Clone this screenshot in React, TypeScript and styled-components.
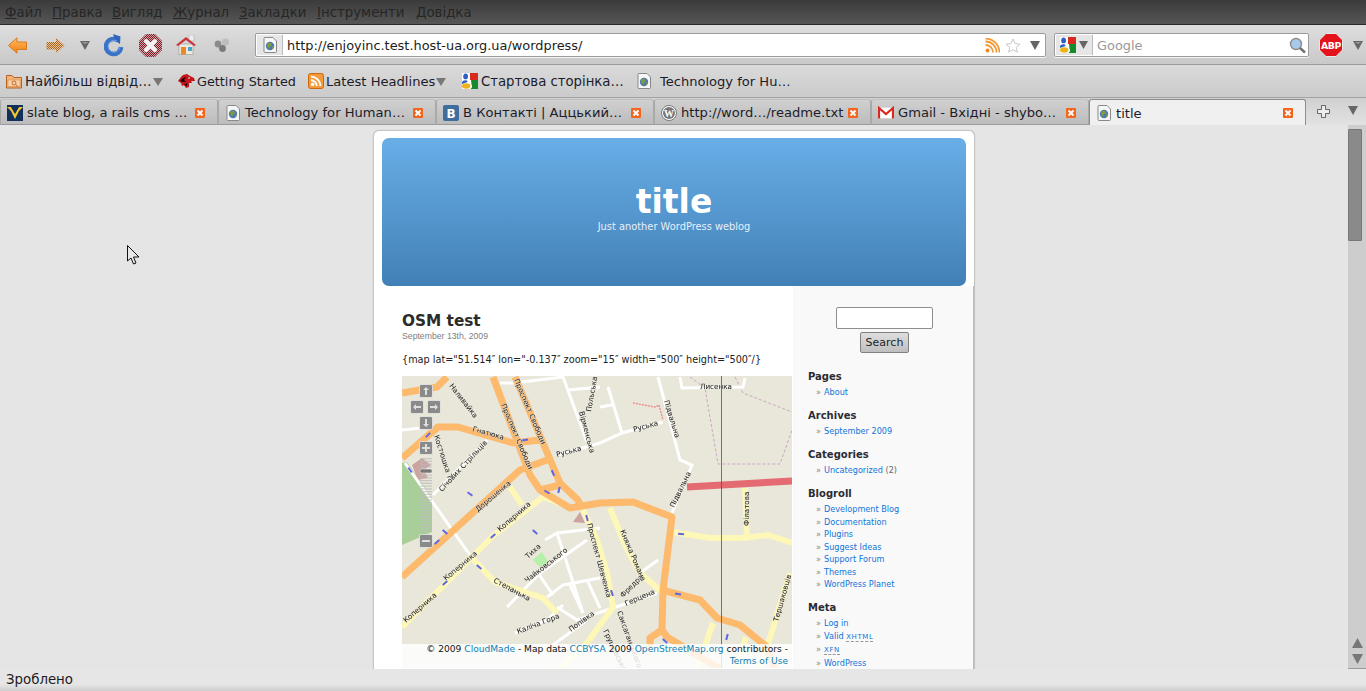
import React from "react";
import styled, { createGlobalStyle } from "styled-components";

const Global = createGlobalStyle`
  html, body { margin: 0; padding: 0; height: 100%; overflow: hidden; }
  body { font-family: "DejaVu Sans", sans-serif; background: #e5e5e5; }
  #root { height: 100%; }
`;

const Win = styled.div`
  position: relative;
  width: 1366px;
  height: 691px;
  display: flex;
  flex-direction: column;
  overflow: hidden;
  font-size: 13.33px;
  color: #222;
`;
const MenuBar = styled.div`
  height: 24px;
  flex: none;
  display: flex;
  align-items: center;
  padding-left: 5px;
  background: linear-gradient(#3b3b3b, #565656);
  border-bottom: 1px solid #2a2a2a;
`;
const MenuItem = styled.span<{ $w: number }>`
  width: ${(p) => p.$w}px;
  color: #262626;
  font-size: 13.33px;
  white-space: nowrap;
`;
const ToolBar = styled.div`
  height: 38px;
  padding-top: 1px;
  flex: none;
  display: flex;
  align-items: center;
  background: linear-gradient(#dedede, #c9c9c9);
  border-bottom: 1px solid #9b9b9b;
`;
const Tool = styled.svg<{ $ml: number }>`
  margin-left: ${(p) => p.$ml}px;
  flex: none;
  display: block;
`;
const Field = styled.div<{ $w: number; $ml: number }>`
  width: ${(p) => p.$w}px;
  margin-left: ${(p) => p.$ml}px;
  height: 24px;
  flex: none;
  box-sizing: border-box;
  display: flex;
  align-items: center;
  background: #fff;
  border: 1px solid #9c9c9c;
  border-radius: 2px;
  box-shadow: 0 1px 0 #f2f2f2;
`;
const FieldBox = styled.div<{ $w: number }>`
  width: ${(p) => p.$w}px;
  height: 20px;
  margin-left: 1px;
  flex: none;
  display: flex;
  align-items: center;
  justify-content: center;
  gap: 3px;
  background: #e6e6e6;
  border-right: 1px solid #bbb;
`;
const FieldText = styled.span<{ $muted?: boolean }>`
  flex: 1;
  margin-left: 4px;
  font-size: 12.9px;
  white-space: nowrap;
  color: ${(p) => (p.$muted ? "#999" : "#1c1c1c")};
`;
const FieldIcon = styled.svg<{ $mr: number }>`
  margin-right: ${(p) => p.$mr}px;
  flex: none;
  display: block;
`;
const BookmarkBar = styled.div`
  height: 32px;
  flex: none;
  display: flex;
  align-items: center;
  background: linear-gradient(#dadada, #cbcbcb);
  border-bottom: 1px solid #a3a3a3;
`;
const Bookmark = styled.div<{ $left: number; $w: number; $gap: number }>`
  margin-left: ${(p) => p.$left}px;
  width: ${(p) => p.$w}px;
  flex: none;
  display: flex;
  align-items: center;
  gap: ${(p) => p.$gap}px;
  white-space: nowrap;
  color: #1c1c2a;
`;
const BookmarkLabel = styled.span<{ $size: number }>`
  font-size: ${(p) => p.$size}px;
`;
const Caret = styled.svg`
  flex: none;
  display: block;
  margin-left: -1px;
`;
const TabStrip = styled.div`
  height: 27px;
  flex: none;
  display: flex;
  background: linear-gradient(#d0d0d0, #e2e2e2);
  box-sizing: border-box;
  padding-top: 1px;
`;
const Tab = styled.div<{ $w: number; $active?: boolean }>`
  width: ${(p) => p.$w}px;
  flex: none;
  box-sizing: border-box;
  display: flex;
  align-items: center;
  padding: 1px 12px 0 6px;
  gap: 4px;
  white-space: nowrap;
  font-size: 13.1px;
  border: 1px solid ${(p) => (p.$active ? "#8d8d8d" : "#a9a9a9")};
  border-top-color: ${(p) => (p.$active ? "#8d8d8d" : "#c0c0c0")};
  border-bottom: ${(p) => (p.$active ? "none" : "1px solid #9a9a9a")};
  border-radius: 3px 3px 0 0;
  background: ${(p) => (p.$active ? "#f0f0f0" : "linear-gradient(#d0d0d0, #bcbcbc)")};
  color: #1c1c2a;
`;
const TabIcon = styled.span`
  width: 16px;
  flex: none;
  display: flex;
  justify-content: center;
`;
const TabLabel = styled.span`
  flex: 1;
  min-width: 0;
  overflow: visible;
`;
const TabTool = styled.svg<{ $ml: number }>`
  margin: 6px 0 0 ${(p) => p.$ml}px;
  align-self: flex-start;
  flex: none;
`;
const Body = styled.div`
  flex: 1;
  min-height: 0;
  display: flex;
`;
const Viewport = styled.div`
  width: 1348px;
  flex: none;
  overflow: hidden;
  background: #e5e5e5;
`;
const Scrollbar = styled.div`
  flex: 1;
  display: flex;
  flex-direction: column;
  background: #cdcdcd;
  padding-top: 4px;
  box-sizing: border-box;
  border-bottom: 1px solid #999;
`;
const Thumb = styled.div`
  width: 14px;
  height: 112px;
  box-sizing: border-box;
  background: #8a8a8a;
  border: 1px solid #777;
  border-radius: 1px;
  flex: none;
`;
const ScrollArrows = styled.div`
  margin-top: auto;
  display: flex;
  flex-direction: column;
  align-items: center;
  gap: 6px;
  padding-bottom: 4px;
`;
const ScrollArrow = styled.svg`
  display: block;
`;
const Page = styled.div`
  width: 602px;
  box-sizing: border-box;
  margin: 5px auto 0 373px;
  background: #fff;
  border: 1px solid #c4c4c4;
  border-bottom: none;
  border-radius: 6px 6px 0 0;
  box-shadow: 0 0 1px #bbb;
  padding-top: 7px;
`;
const Header = styled.header`
  width: 584px;
  height: 148px;
  margin-left: 8px;
  box-sizing: border-box;
  padding-top: 44px;
  border-radius: 7px;
  background: linear-gradient(#69aee7, #4180b6);
  color: #fff;
  text-align: center;
`;
const SiteTitle = styled.h1`
  margin: 0;
  font-size: 33px;
  line-height: 39px;
  font-weight: bold;
`;
const Tagline = styled.div`
  font-size: 9.85px;
  line-height: 12px;
  color: #e6f0fa;
`;
const Columns = styled.div`
  display: flex;
`;
const Main = styled.main`
  width: 419px;
  box-sizing: border-box;
  padding: 25px 1px 0 28px;
  flex: none;
`;
const PostTitle = styled.h2`
  margin: 0;
  font-size: 15.3px;
  line-height: 20px;
  font-weight: bold;
  color: #2b2b2b;
`;
const PostDate = styled.div`
  font-family: "Liberation Sans", sans-serif;
  font-size: 8.7px;
  line-height: 10px;
  color: #808080;
`;
const PostText = styled.p`
  margin: 13px 0 10px;
  font-size: 9.7px;
  line-height: 12px;
  color: #222;
  white-space: nowrap;
`;
const MapFrame = styled.div`
  position: relative;
  width: 390px;
  height: 292px;
  overflow: hidden;
  background: #e9e6da;
`;
const MapSvg = styled.svg`
  display: block;
  filter: blur(0.35px);
  font-family: "DejaVu Sans", sans-serif;
`;
const MapLabel = styled.text`
  font-size: 7.2px;
  fill: #222;
  stroke: #e9e6da;
  stroke-width: 0.7px;
  paint-order: stroke;
`;
const Attribution = styled.div`
  position: absolute;
  left: 0;
  right: 0;
  bottom: 0;
  height: 24px;
  box-sizing: border-box;
  padding-right: 4px;
  text-align: right;
  background: rgba(255, 255, 255, 0.82);
  font-size: 9.1px;
  line-height: 11.5px;
  color: #111;
  white-space: nowrap;
`;
const MapLink = styled.span`
  color: #0d7fb5;
`;
const Sidebar = styled.aside`
  flex: 1;
  background: #f9f9f9;
  padding: 21px 0 0 15px;
  border-right: 1px solid #bbb;
  box-sizing: border-box;
  height: 400px;
`;
const SearchInput = styled.div`
  width: 97px;
  height: 22px;
  margin-left: 28px;
  box-sizing: border-box;
  background: #fff;
  border: 1px solid #8e8e8e;
  border-radius: 2px;
`;
const SearchButton = styled.button`
  display: block;
  width: 49px;
  height: 21px;
  margin: 3px 0 18px 52px;
  padding: 0;
  box-sizing: border-box;
  font-family: "DejaVu Sans", sans-serif;
  font-size: 11px;
  color: #222;
  background: linear-gradient(#dedede, #bfbfbf);
  border: 1px solid #808080;
  border-radius: 2px;
`;
const WidgetTitle = styled.h3`
  margin: 0 0 3px;
  font-size: 10px;
  line-height: 12px;
  font-weight: bold;
  color: #2b2b33;
`;
const WidgetList = styled.ul`
  list-style: none;
  margin: 0 0 11.5px;
  padding: 0 0 0 8px;
`;
const WidgetItem = styled.li`
  font-size: 8.15px;
  line-height: 12.5px;
  color: #666;
  white-space: nowrap;
  &::before {
    content: "»";
    color: #888;
    display: inline-block;
    width: 8px;
  }
`;
const SideLink = styled.span`
  color: #0f75da;
`;
const Abbr = styled.span`
  font-size: 7px;
  letter-spacing: 0.6px;
  border-bottom: 1px dashed #999;
`;
const StatusBar = styled.div`
  height: 22px;
  flex: none;
  box-sizing: border-box;
  padding: 0 0 1px 6px;
  display: flex;
  align-items: center;
  background: linear-gradient(#e6e6e6 0, #e6e6e6 70%, #cdcdcd 100%);
  color: #1c1c1c;
`;
const Pointer = styled.svg`
  position: absolute;
  left: 127px;
  top: 245px;
`;
const FavIcon = styled.svg`
  flex: none;
  display: block;
`;

const Triangle = ({ ml = 0 }: { ml?: number }) => (
  <Tool $ml={ml} width="10" height="9" viewBox="0 0 10 9">
    <path d="M0 0H10L5 9Z" fill="#666" />
    <path d="M1.5 1H8.5L5 3Z" fill="#999" />
  </Tool>
);
const SmallCaret = () => (
  <Caret width="10" height="9" viewBox="0 0 10 9">
    <path d="M0 1H10L5 9Z" fill="#777" />
  </Caret>
);
const PageGlobe = ({ size = 16 }: { size?: number }) => (
  <FavIcon width={size - 2} height={size} viewBox="0 0 14 16">
    <path d="M1 1.5Q1 .5 2 .5H10L13.5 4V14.5Q13.5 15.5 12.5 15.5H2Q1 15.5 1 14.5Z" fill="#f7f7f7" stroke="#888" />
    <circle cx="7" cy="9" r="4.2" fill="#4b78b4" />
    <path d="M4 7Q6 5 8 6L9 8 7 9.5 6 12 4.5 10ZM9 10L11 9 10.5 11.5 9 12Z" fill="#7e9c3e" />
  </FavIcon>
);
const RssIcon = () => (
  <FavIcon width="16" height="16" viewBox="0 0 16 16">
    <rect x=".5" y=".5" width="15" height="15" rx="2" fill="#f49a3a" stroke="#c96a12" />
    <circle cx="4.6" cy="11.4" r="1.7" fill="#fff" />
    <path d="M3 7.2A6 6 0 0 1 8.8 13M3 3.6A9.5 9.5 0 0 1 12.4 13" fill="none" stroke="#fff" strokeWidth="1.9" />
  </FavIcon>
);
const GoogleIcon = ({ w = 16 }: { w?: number }) => (
  <FavIcon width={w} height={w} viewBox="0 0 16 16">
    <rect width="16" height="16" rx="1" fill="#fff" />
    <path d="M8 0H16V7H8Z" fill="#d92a1f" />
    <path d="M16 7V16H8.5Q11 14 9.5 11.5L9 7Z" fill="#178a2f" />
    <ellipse cx="3.6" cy="3.4" rx="2.4" ry="2.9" fill="#2f5fc0" />
    <path d="M0 9Q1 6.8 5 7.5L5.6 9 0 11Z" fill="#2f5fc0" />
    <ellipse cx="4.2" cy="13" rx="4.2" ry="2.8" fill="#eeb21a" />
  </FavIcon>
);
const CloseTab = () => (
  <FavIcon width="10" height="10" viewBox="0 0 10 10">
    <rect width="10" height="10" rx="1" fill="#f4641c" />
    <path d="M2.5 2.5L7.5 7.5M7.5 2.5L2.5 7.5" stroke="#fff" strokeWidth="2" />
  </FavIcon>
);
const WvIcon = () => (
  <FavIcon width="16" height="16" viewBox="0 0 16 16">
    <rect width="16" height="16" fill="#12305c" />
    <path d="M0 2H4L8 8 12 2H16L12 6 8 14 4 6Z" fill="#f4c52c" />
    <path d="M4 2L8 5 12 2 8 9Z" fill="#12305c" />
  </FavIcon>
);
const VkIcon = () => (
  <FavIcon width="16" height="16" viewBox="0 0 16 16">
    <rect width="16" height="16" rx="2" fill="#3e6e9f" />
    <text x="8" y="12.5" textAnchor="middle" fontSize="12" fontWeight="bold" fontFamily="'DejaVu Sans'" fill="#fff">B</text>
  </FavIcon>
);
const WpIcon = () => (
  <FavIcon width="16" height="16" viewBox="0 0 16 16">
    <circle cx="8" cy="8" r="7.5" fill="#fff" stroke="#777" />
    <circle cx="8" cy="8" r="6" fill="#777" />
    <text x="8" y="11.5" textAnchor="middle" fontSize="10" fontFamily="'Liberation Serif'" fontWeight="bold" fill="#fff">W</text>
  </FavIcon>
);
const GmailIcon = () => (
  <FavIcon width="16" height="16" viewBox="0 0 16 16">
    <rect y="2.5" width="16" height="11" fill="#fff" stroke="#ccc" strokeWidth=".5" />
    <path d="M1 13.5V3L8 9 15 3V13.5" fill="none" stroke="#d8281f" strokeWidth="2.2" />
  </FavIcon>
);
const FolderIcon = () => (
  <FavIcon width="16" height="16" viewBox="0 0 16 16">
    <path d="M.5 15V2.5H6L7.5 4.5H15.5V15Z" fill="#f3b37a" stroke="#b4621e" />
    <path d="M2 7H14V13.5H2Z" fill="#f9d3aa" stroke="#d58a48" strokeWidth=".6" />
    <circle cx="8" cy="10" r="2" fill="none" stroke="#c0682a" />
    <path d="M9.5 11.5L12 13.5" stroke="#c0682a" />
  </FavIcon>
);
const DinoIcon = () => (
  <FavIcon width="17" height="16" viewBox="0 0 17 16">
    <path d="M0 8L3 4 5 2 9 1 12 3 16 5 17 8 13 8 14 10 11 10 11 14 8 15 6 12 4 13 3 10Z" fill="#c4141a" />
    <path d="M2 8L5 5 8 4 6 7 8 9 5 9ZM6 12L9 10 9 13Z" fill="#1a0606" />
    <circle cx="11" cy="5" r=".8" fill="#fff" />
  </FavIcon>
);

const tabs = [
  { w: 218, label: "slate blog, a rails cms …", icon: <WvIcon /> },
  { w: 218, label: "Technology for Human…", icon: <PageGlobe /> },
  { w: 218, label: "В Контакті | Аццький…", icon: <VkIcon /> },
  { w: 217, label: "http://word…/readme.txt", icon: <WpIcon /> },
  { w: 218, label: "Gmail - Вхідні - shybo…", icon: <GmailIcon /> },
  { w: 217, label: "title", icon: <PageGlobe />, active: true },
];
const menus: [string, string, number][] = [
  ["Ф", "айл", 47],
  ["П", "равка", 60],
  ["В", "игляд", 61],
  ["Ж", "урнал", 66],
  ["З", "акладки", 78],
  ["І", "нструменти", 99],
  ["Д", "овідка", 60],
];

const Orange = "#fdb96c";
const Yellow = "#fdf7b8";
const orangeRoads = [
  "402,393 437,387 447,377",
  "402,458 438,427 458,427 513,443 540,440",
  "493,377 530,475 540,490 570,508 600,503 633,502 672,517 663,590 662,630",
  "515,377 560,483 578,500 582,508",
  "402,577 520,470 547,460",
  "540,490 560,485",
  "662,590 700,600 717,618 740,625 767,647 775,669",
  "662,630 650,638 650,650",
  "662,630 667,637 720,669",
];
const yellowRoads = [
  "402,627 493,536 543,497 565,505",
  "510,487 522,505",
  "472,558 495,582 543,598 557,613",
  "583,510 597,540 607,573 613,607 587,643 560,669",
  "610,508 625,545 640,573 663,593",
  "672,532 710,538 743,538 768,535 792,543",
  "745,488 747,538",
  "790,573 767,647 760,669",
  "713,623 697,669",
  "746,637 736,669",
];
const whiteRoads = [
  "513,383 563,377 587,442",
  "568,390 600,387",
  "557,455 600,443 622,433 663,422",
  "608,387 622,433",
  "600,407 612,405",
  "658,377 680,460 692,465 672,513",
  "680,377 682,388 743,387 745,378",
  "402,430 430,427",
  "487,440 433,495",
  "405,463 472,558",
  "507,607 540,573 587,540",
  "557,533 583,613",
  "538,573 553,595",
  "547,597 563,585 600,578",
  "570,585 583,613",
  "588,582 600,608",
  "557,607 577,620 613,608 657,593",
  "515,633 547,620 563,605",
  "553,645 587,620",
  "640,573 658,560",
  "545,540 557,533 600,528",
  "500,383 513,383",
];
const arrows: [number, number, number][] = [
  [428, 435, -45], [410, 470, 55], [470, 494, 35], [445, 532, 40], [535, 532, 40], [493, 536, -40],
  [437, 542, -40], [525, 440, -10], [553, 473, 65], [559, 490, -75], [547, 492, 30], [587, 518, 75],
  [681, 534, 5], [445, 583, -40], [479, 567, 40], [612, 593, 70], [678, 594, 10], [665, 641, 40], [727, 637, -75],
];
const labels: [string, number, number, number][] = [
  ["Наливайка", 449, 386, 52],
  ["Гнатюка", 472, 431, 16],
  ["Проспект Свободи", 514, 380, 67],
  ["Проспект Свободи", 501, 405, 67],
  ["Костюшка Т.", 434, 436, 72],
  ["Січових Стрільців", 442, 492, -47],
  ["Дорошенка", 478, 512, -40],
  ["Коперника", 500, 532, -41],
  ["Руська", 557, 457, -15],
  ["Руська", 634, 432, -16],
  ["Підвальна", 664, 401, 73],
  ["Підвальна", 674, 508, -64],
  ["Лисенка", 700, 389, 0],
  ["Вірменська", 579, 412, 75],
  ["Польська", 591, 412, -80],
  ["Коперника", 446, 581, -40],
  ["Коперника", 406, 623, -41],
  ["Степанька", 493, 582, 28],
  ["Тиха", 528, 559, -42],
  ["Чайковського", 527, 583, -38],
  ["Проспект Шевченка", 587, 524, 75],
  ["Княжа Романа", 620, 531, 67],
  ["Фредра", 623, 598, -45],
  ["Герцена", 626, 606, -23],
  ["Калiча Гора", 518, 634, -21],
  ["Попівка", 571, 632, -36],
  ["Саксаганського", 617, 612, 70],
  ["Грушевського", 603, 631, 64],
  ["Тершаковців", 778, 622, -74],
  ["Філатова", 749, 526, -90],
];

const MapButton = ({ x, y, d }: { x: number; y: number; d: string }) => (
  <g>
    <rect x={x - 6.5} y={y - 6.5} width="13" height="13" rx="1.5" fill="#8a8a8a" stroke="#e8e8e8" strokeWidth=".8" />
    <path d={d} transform={`translate(${x} ${y})`} fill="#dedede" />
  </g>
);

const MapDrawing = () => (
  <MapSvg width="390" height="292" viewBox="402 376 390 292">
    <rect x="402" y="376" width="390" height="292" fill="#e9e6da" />
    <path d="M402 463L407 462 432 498V532L402 545Z" fill="#a9cf99" />
    <path d="M533 560L542 552 548 562 540 567Z" fill="#b5f0a8" />
    <path d="M412 465L422 458 431 465 424 470 428 478 418 480Z" fill="#cba3a0" />
    <path d="M573 522L580 512 585 523Z" fill="#cba3a0" />
    <polyline points="690,377 705,388 718,464 780,464 792,430" fill="none" stroke="#cba6c6" strokeWidth="1" strokeDasharray="3 2" />
    <polyline points="735,377 743,393 792,412" fill="none" stroke="#cba6c6" strokeWidth="1" strokeDasharray="3 2" />
    <polyline points="633,403 655,407 659,405 663,420" fill="none" stroke="#ee8b8b" strokeWidth="1.4" strokeDasharray="2 1" />
    {whiteRoads.map((p) => (
      <polyline key={p} points={p} fill="none" stroke="#fff" strokeWidth="3" />
    ))}
    {yellowRoads.map((p) => (
      <polyline key={p} points={p} fill="none" stroke={Yellow} strokeWidth="6" />
    ))}
    {orangeRoads.map((p) => (
      <polyline key={p} points={p} fill="none" stroke={Orange} strokeWidth="7" strokeLinejoin="round" />
    ))}
    <line x1="687" y1="487" x2="792" y2="481" stroke="#e36b71" strokeWidth="7" />
    {arrows.map(([x, y, r]) => (
      <line key={`${x}-${y}`} x1={x - 3} y1={y} x2={x + 3} y2={y} transform={`rotate(${r} ${x} ${y})`} stroke="#5f66e6" strokeWidth="2" />
    ))}
    {labels.map(([t, x, y, r]) => (
      <MapLabel key={`${t}-${x}`} x={x} y={y} transform={`rotate(${r} ${x} ${y})`}>
        {t}
      </MapLabel>
    ))}
    <line x1="721.5" y1="376" x2="721.5" y2="668" stroke="#555" strokeWidth=".8" />
    <g opacity=".75">
      {Array.from({ length: 27 }, (_, i) => (
        <rect key={i} x="420" y={458 + i * 2.75} width="12" height="1.3" fill="#bdbdbd" />
      ))}
    </g>
    <rect x="420" y="469" width="12" height="4" rx="1.5" fill="#777" stroke="#eee" strokeWidth=".6" />
    <MapButton x={426} y={391} d="M0-4L3-1H1V4H-1V-1H-3Z" />
    <MapButton x={417} y={407} d="M-4 0L-1-3V-1H4V1H-1V3Z" />
    <MapButton x={434} y={407} d="M4 0L1-3V-1H-4V1H1V3Z" />
    <MapButton x={426} y={423} d="M0 4L3 1H1V-4H-1V1H-3Z" />
    <MapButton x={426} y={448} d="M-1-4H1V-1H4V1H1V4H-1V1H-4V-1H-1Z" />
    <MapButton x={426} y={541} d="M-4-1H4V1H-4Z" />
  </MapSvg>
);

export default function App() {
  return (
    <Win>
      <Global />
      <MenuBar>
        {menus.map(([k, r, w]) => (
          <MenuItem key={k} $w={w}>
            <u>{k}</u>
            {r}
          </MenuItem>
        ))}
      </MenuBar>
      <ToolBar>
        <Tool $ml={8} width="19" height="17" viewBox="0 0 19 17">
          <defs>
            <linearGradient id="bk" x1="0" y1="0" x2="0" y2="1">
              <stop offset="0" stopColor="#ffc060" />
              <stop offset="1" stopColor="#f07c10" />
            </linearGradient>
            <pattern id="dit" width="2" height="2" patternUnits="userSpaceOnUse">
              <rect width="2" height="2" fill="#e9c49a" />
              <rect width="1" height="1" fill="#a8651f" />
              <rect x="1" y="1" width="1" height="1" fill="#a8651f" />
            </pattern>
            <pattern id="dit2" width="2" height="2" patternUnits="userSpaceOnUse">
              <rect width="2" height="2" fill="#c8a4a8" />
              <rect width="1" height="1" fill="#861c26" />
              <rect x="1" y="1" width="1" height="1" fill="#861c26" />
            </pattern>
          </defs>
          <path d="M.5 8.5L9 .8V5H18.5V12.5H9V16.2Z" fill="url(#bk)" stroke="#d87a20" />
        </Tool>
        <Tool $ml={19} width="19" height="17" viewBox="0 0 19 17">
          <path d="M18.5 8.5L10 .8V5H.5V12.5H10V16.2Z" fill="url(#dit)" />
        </Tool>
        <Triangle ml={15} />
        <Tool $ml={14} width="20" height="24" viewBox="0 0 20 24">
          <path d="M14 7.5A7.5 7.5 0 1 0 17 14" fill="none" stroke="#3a72c6" strokeWidth="4.6" />
          <path d="M9 1L16.5 3.5 16 11 11.5 8Z" fill="#2f66bb" />
          <path d="M13 8A6 6 0 1 0 16 14" fill="none" stroke="#6f9fe0" strokeWidth="1" />
        </Tool>
        <Tool $ml={15} width="23" height="23" viewBox="0 0 23 23">
          <path d="M7 0H16L23 7V16L16 23H7L0 16V7Z" fill="url(#dit2)" />
          <path d="M7 7L16 16M16 7L7 16" stroke="#f2f2f2" strokeWidth="4" strokeLinecap="round" />
        </Tool>
        <Tool $ml={14} width="20" height="20" viewBox="0 0 20 20">
          <rect x="13" y="0" width="5" height="6" fill="#eee" stroke="#aaa" strokeWidth=".6" />
          <path d="M3 9H17V19.5H3Z" fill="#efe9dc" stroke="#999" strokeWidth=".6" />
          <path d="M0 10L10 2 20 10 18 11 10 5 2 11Z" fill="#c8353a" />
          <rect x="5" y="12" width="5" height="7.5" fill="#e88a2c" />
          <rect x="12" y="12" width="4" height="4" fill="#4aa3c9" />
        </Tool>
        <Tool $ml={18} width="16" height="14" viewBox="0 0 16 14">
          <circle cx="4" cy="6" r="3.4" fill="#8c8c8c" />
          <circle cx="11.5" cy="4" r="3.6" fill="#bdbdbd" />
          <circle cx="8.5" cy="10.5" r="3.4" fill="#7a7a7a" />
        </Tool>
        <Field $w={791} $ml={25}>
          <FieldBox $w={25}>
            <PageGlobe />
          </FieldBox>
          <FieldText>http://enjoyinc.test.host-ua.org.ua/wordpress/</FieldText>
          <FieldIcon $mr={5} width="15" height="15" viewBox="0 0 15 15">
            <circle cx="2.5" cy="12.5" r="2" fill="#f08a24" />
            <path d="M.5 7A7.5 7.5 0 0 1 8 14.5M.5 3.5A11 11 0 0 1 11.5 14.5M.5 .5A14 14 0 0 1 14.5 14.5" fill="none" stroke="#f29a38" strokeWidth="1.8" />
          </FieldIcon>
          <FieldIcon $mr={9} width="16" height="15" viewBox="0 0 16 15">
            <path d="M8 1L10.1 5.6 15 6.1 11.3 9.4 12.4 14.2 8 11.7 3.6 14.2 4.7 9.4 1 6.1 5.9 5.6Z" fill="#fff" stroke="#c8c8c8" />
          </FieldIcon>
          <FieldIcon $mr={5} width="10" height="9" viewBox="0 0 10 9">
            <path d="M0 0H10L5 9Z" fill="#666" />
          </FieldIcon>
        </Field>
        <Field $w={255} $ml={8}>
          <FieldBox $w={36}>
            <GoogleIcon />
            <FavIcon width="9" height="8" viewBox="0 0 9 8">
              <path d="M0 0H9L4.5 8Z" fill="#666" />
            </FavIcon>
          </FieldBox>
          <FieldText $muted>Google</FieldText>
          <FieldIcon $mr={2} width="17" height="17" viewBox="0 0 17 17">
            <circle cx="7" cy="7" r="5.5" fill="#a9c8ec" stroke="#8d8d8d" strokeWidth="1.4" />
            <path d="M11 11L16 15.5" stroke="#6f6f6f" strokeWidth="2.4" />
          </FieldIcon>
        </Field>
        <Tool $ml={10} width="24" height="24" viewBox="0 0 24 24">
          <path d="M7 .5H17L23.5 7V17L17 23.5H7L.5 17V7Z" fill="#e3131b" stroke="#e8e8e8" />
          <text x="12" y="15.5" textAnchor="middle" fontSize="9.4" fontWeight="bold" fontFamily="'DejaVu Sans'" fill="#fff" letterSpacing="-.5">ABP</text>
        </Tool>
        <Triangle ml={10} />
      </ToolBar>
      <BookmarkBar>
        <Bookmark $left={6} $w={163} $gap={3}>
          <FolderIcon />
          <BookmarkLabel $size={13.33}>Найбільш відвід…</BookmarkLabel>
          <SmallCaret />
        </Bookmark>
        <Bookmark $left={9} $w={118} $gap={2}>
          <DinoIcon />
          <BookmarkLabel $size={12.8}>Getting Started</BookmarkLabel>
        </Bookmark>
        <Bookmark $left={12} $w={144} $gap={2}>
          <RssIcon />
          <BookmarkLabel $size={13.1}>Latest Headlines</BookmarkLabel>
          <SmallCaret />
        </Bookmark>
        <Bookmark $left={10} $w={164} $gap={3}>
          <GoogleIcon />
          <BookmarkLabel $size={13.25}>Стартова сторінка…</BookmarkLabel>
        </Bookmark>
        <Bookmark $left={11} $w={160} $gap={9}>
          <PageGlobe />
          <BookmarkLabel $size={13.05}>Technology for Hu…</BookmarkLabel>
        </Bookmark>
      </BookmarkBar>
      <TabStrip>
        {tabs.map((t) => (
          <Tab key={t.label} $w={t.w} $active={t.active}>
            <TabIcon>{t.icon}</TabIcon>
            <TabLabel>{t.label}</TabLabel>
            <CloseTab />
          </Tab>
        ))}
        <TabTool $ml={11} width="13" height="13" viewBox="0 0 13 13">
          <path d="M4.5.5H8.5V4.5H12.5V8.5H8.5V12.5H4.5V8.5H.5V4.5H4.5Z" fill="#eee" stroke="#666" />
        </TabTool>
        <TabTool $ml={18} width="10" height="10" viewBox="0 0 10 10">
          <path d="M0 1H10L5 10Z" fill="#666" />
        </TabTool>
      </TabStrip>
      <Body>
        <Viewport>
          <Page>
            <Header>
              <SiteTitle>title</SiteTitle>
              <Tagline>Just another WordPress weblog</Tagline>
            </Header>
            <Columns>
              <Main>
                <PostTitle>OSM test</PostTitle>
                <PostDate>September 13th, 2009</PostDate>
                <PostText>{'{map lat="51.514″ lon="-0.137″ zoom="15″ width="500″ height="500″/}'}</PostText>
                <MapFrame>
                  <MapDrawing />
                  <Attribution>
                    © 2009 <MapLink>CloudMade</MapLink> - Map data <MapLink>CCBYSA</MapLink> 2009{" "}
                    <MapLink>OpenStreetMap.org</MapLink> contributors -
                    <br />
                    <MapLink>Terms of Use</MapLink>
                  </Attribution>
                </MapFrame>
              </Main>
              <Sidebar>
                <SearchInput />
                <SearchButton>Search</SearchButton>
                <WidgetTitle>Pages</WidgetTitle>
                <WidgetList>
                  <WidgetItem><SideLink>About</SideLink></WidgetItem>
                </WidgetList>
                <WidgetTitle>Archives</WidgetTitle>
                <WidgetList>
                  <WidgetItem><SideLink>September 2009</SideLink></WidgetItem>
                </WidgetList>
                <WidgetTitle>Categories</WidgetTitle>
                <WidgetList>
                  <WidgetItem><SideLink>Uncategorized</SideLink> (2)</WidgetItem>
                </WidgetList>
                <WidgetTitle>Blogroll</WidgetTitle>
                <WidgetList>
                  {["Development Blog", "Documentation", "Plugins", "Suggest Ideas", "Support Forum", "Themes", "WordPress Planet"].map((s) => (
                    <WidgetItem key={s}><SideLink>{s}</SideLink></WidgetItem>
                  ))}
                </WidgetList>
                <WidgetTitle>Meta</WidgetTitle>
                <WidgetList>
                  <WidgetItem><SideLink>Log in</SideLink></WidgetItem>
                  <WidgetItem><SideLink>Valid <Abbr>XHTML</Abbr></SideLink></WidgetItem>
                  <WidgetItem><SideLink><Abbr>XFN</Abbr></SideLink></WidgetItem>
                  <WidgetItem><SideLink>WordPress</SideLink></WidgetItem>
                </WidgetList>
              </Sidebar>
            </Columns>
          </Page>
        </Viewport>
        <Scrollbar>
          <Thumb />
          <ScrollArrows>
            <ScrollArrow width="11" height="10" viewBox="0 0 11 10"><path d="M5.5 0L11 10H0Z" fill="#777" /></ScrollArrow>
            <ScrollArrow width="11" height="10" viewBox="0 0 11 10"><path d="M5.5 10L11 0H0Z" fill="#777" /></ScrollArrow>
          </ScrollArrows>
        </Scrollbar>
      </Body>
      <StatusBar>Зроблено</StatusBar>
      <Pointer width="13" height="20" viewBox="0 0 13 20">
        <path d="M.5.5V16L4 13 6.5 19 9 18 6.5 12H12Z" fill="#e8e8e8" stroke="#111" />
      </Pointer>
    </Win>
  );
}
